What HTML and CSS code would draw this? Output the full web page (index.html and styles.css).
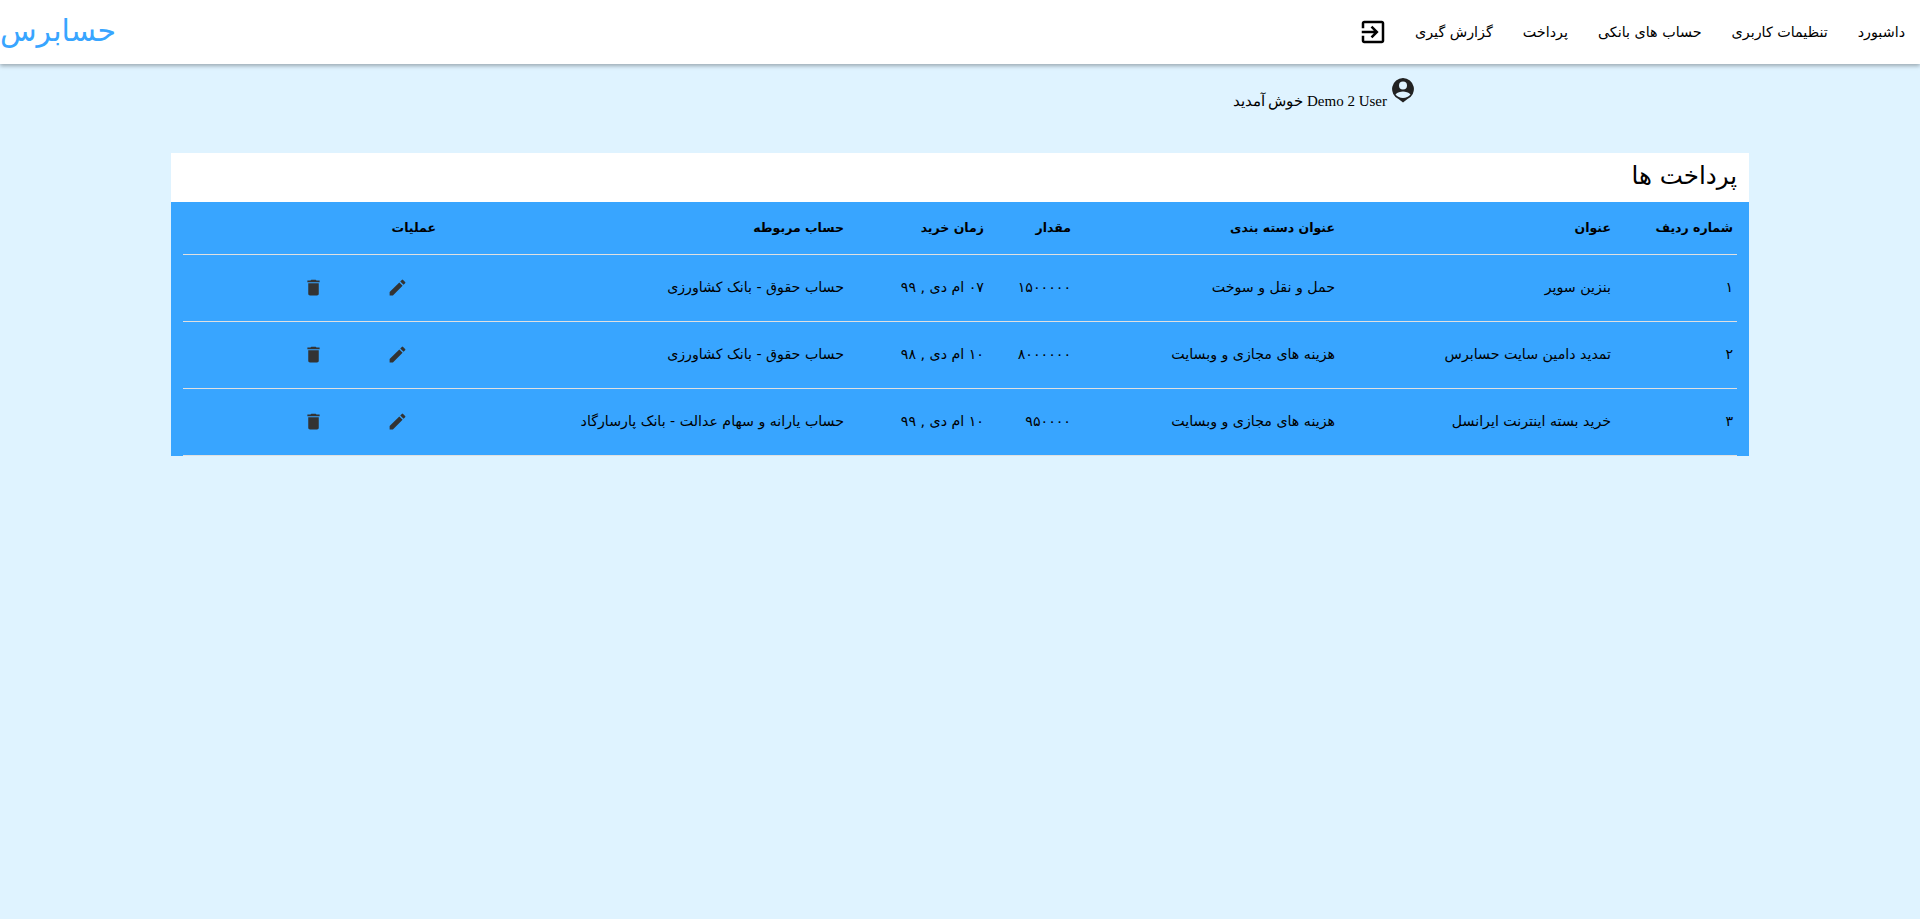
FILE: index.html
```html
<!DOCTYPE html>
<html lang="fa" dir="rtl">
<head>
<meta charset="utf-8">
<title>حسابرس</title>
<link rel="stylesheet" href="styles.css">
</head>
<body>
<header class="topbar">
  <nav class="menu">
    <a class="menu-item">داشبورد</a>
    <a class="menu-item">تنظیمات کاربری</a>
    <a class="menu-item">حساب های بانکی</a>
    <a class="menu-item">پرداخت</a>
    <a class="menu-item">گزارش گیری</a>
    <a class="menu-icon"><svg viewBox="0 0 24 24" width="30" height="30"><path d="M10.09 15.59L11.5 17l5-5-5-5-1.41 1.41L12.67 11H3v2h9.67l-2.58 2.59zM19 3H5c-1.11 0-2 .9-2 2v4h2V5h14v14H5v-4H3v4c0 1.1.89 2 2 2h14c1.1 0 2-.9 2-2V5c0-1.1-.9-2-2-2z"/></svg></a>
  </nav>
  <div class="logo">حسابرس</div>
</header>
<div class="welcome">
  <svg class="user-icon" viewBox="0 0 24 26" width="24" height="26"><path fill-rule="evenodd" d="M12 1a11 11 0 0 0-4.500 21L12 25.500l4.500-3.500A11 11 0 0 0 12 1zm0 3.500a4 4 0 1 1 0 8 4 4 0 0 1 0-8zm0 16.500c-3 0-5.700-1.300-7.500-3.500C6.300 15.300 9.500 14.500 12 14.500s5.700.8 7.500 3c-1.800 2.200-4.500 3.500-7.500 3.500z"/></svg>
  <span class="welcome-text"><span dir="ltr">Demo 2 User</span> خوش آمدید</span>
</div>
<main class="panel">
  <h1 class="panel-title">پرداخت ها</h1>
  <div class="table-wrap">
    <table class="grid">
      <colgroup>
        <col class="c1"><col class="c2"><col class="c3"><col class="c4"><col class="c5"><col class="c6"><col class="c7"><col class="c8"><col class="c9">
      </colgroup>
      <thead>
        <tr>
          <th>شماره ردیف</th><th>عنوان</th><th>عنوان دسته بندی</th><th>مقدار</th><th>زمان خرید</th><th>حساب مربوطه</th><th colspan="3">عملیات</th>
        </tr>
      </thead>
      <tbody>
        <tr>
          <td>۱</td><td>بنزین سوپر</td><td>حمل و نقل و سوخت</td><td>۱۵۰۰۰۰۰</td><td>۰۷ ام دی , ۹۹</td><td>حساب حقوق - بانک کشاورزی</td>
          <td class="act"><svg class="ico" viewBox="0 0 24 24"><path d="M3 17.250V21h3.750L17.810 9.940l-3.750-3.750L3 17.250zM20.710 7.040a1 1 0 0 0 0-1.410l-2.340-2.340a1 1 0 0 0-1.410 0l-1.830 1.830 3.750 3.750 1.830-1.830z"/></svg></td>
          <td class="act"><svg class="ico" viewBox="0 0 24 24"><path d="M6 19c0 1.100.9 2 2 2h8c1.100 0 2-.9 2-2V7H6v12zM19 4h-3.500l-1-1h-5l-1 1H5v2h14V4z"/></svg></td><td></td>
        </tr>
        <tr>
          <td>۲</td><td>تمدید دامین سایت حسابرس</td><td>هزینه های مجازی و وبسایت</td><td>۸۰۰۰۰۰۰</td><td>۱۰ ام دی , ۹۸</td><td>حساب حقوق - بانک کشاورزی</td>
          <td class="act"><svg class="ico" viewBox="0 0 24 24"><path d="M3 17.250V21h3.750L17.810 9.940l-3.750-3.750L3 17.250zM20.710 7.040a1 1 0 0 0 0-1.410l-2.340-2.340a1 1 0 0 0-1.410 0l-1.830 1.830 3.750 3.750 1.830-1.830z"/></svg></td>
          <td class="act"><svg class="ico" viewBox="0 0 24 24"><path d="M6 19c0 1.100.9 2 2 2h8c1.100 0 2-.9 2-2V7H6v12zM19 4h-3.500l-1-1h-5l-1 1H5v2h14V4z"/></svg></td><td></td>
        </tr>
        <tr>
          <td>۳</td><td>خرید بسته اینترنت ایرانسل</td><td>هزینه های مجازی و وبسایت</td><td>۹۵۰۰۰۰</td><td>۱۰ ام دی , ۹۹</td><td>حساب یارانه و سهام عدالت - بانک پارسارگاد</td>
          <td class="act"><svg class="ico" viewBox="0 0 24 24"><path d="M3 17.250V21h3.750L17.810 9.940l-3.750-3.750L3 17.250zM20.710 7.040a1 1 0 0 0 0-1.410l-2.340-2.340a1 1 0 0 0-1.410 0l-1.830 1.830 3.750 3.750 1.830-1.830z"/></svg></td>
          <td class="act"><svg class="ico" viewBox="0 0 24 24"><path d="M6 19c0 1.100.9 2 2 2h8c1.100 0 2-.9 2-2V7H6v12zM19 4h-3.500l-1-1h-5l-1 1H5v2h14V4z"/></svg></td><td></td>
        </tr>
      </tbody>
    </table>
  </div>
</main>
</body>
</html>
```
FILE: styles.css
```css
* { box-sizing: border-box; }
html, body { margin: 0; height: 100%; }
body {
  background: #dff3ff;
  color: #000;
  font-family: "DejaVu Sans", sans-serif;
  min-height: 919px;
}
.topbar {
  height: 64px;
  background: #fff;
  box-shadow: 0 2px 4px rgba(0, 0, 0, 0.3);
  display: flex;
  justify-content: space-between;
  align-items: center;
}
.menu { display: flex; align-items: center; padding-right: 15px; }
.menu-item { font-size: 14.3px; padding: 0 15px; line-height: 20px; }
.menu-item:first-child { padding-right: 0; }
.menu-icon { display: flex; padding: 0 12px; }
.logo { font-size: 30px; color: #38a5ff; line-height: 38px; padding-bottom: 2px; }
.welcome {
  display: flex;
  align-items: flex-start;
  width: 1415px;
  margin-right: 505px;
  padding-top: 13px;
  height: 89px;
  gap: 4px;
}
.user-icon { fill: #222; flex: none; }
.welcome-text { font-family: "Liberation Serif", serif; font-size: 15px; padding-top: 15px; line-height: 18px; }
.panel { margin: 0 171px; width: 1578px; background: #fff; }
.panel-title { margin: 0; height: 49px; padding: 0 12px; font-size: 24.5px; font-weight: 400; line-height: 46px; }
.table-wrap { background: #38a5ff; padding: 0 12px; height: 254px; }
.grid { width: 1554px; table-layout: fixed; border-collapse: collapse; }
.c1 { width: 122px; } .c2 { width: 276px; } .c3 { width: 264px; } .c4 { width: 87px; }
.c5 { width: 140px; } .c6 { width: 408px; } .c7 { width: 85px; } .c8 { width: 84px; } .c9 { width: 88px; }
.grid th, .grid td { text-align: right; padding: 0 4px; border-bottom: 1px solid #e0e0e0; }
.grid th { height: 52px; font-weight: 700; font-size: 12.5px; }
.grid td { height: 67px; font-size: 14.2px; padding-bottom: 2px; }
.grid .act { text-align: center; padding: 0; }
.ico { width: 21px; height: 21px; fill: #333; display: inline-block; vertical-align: middle; }
```
